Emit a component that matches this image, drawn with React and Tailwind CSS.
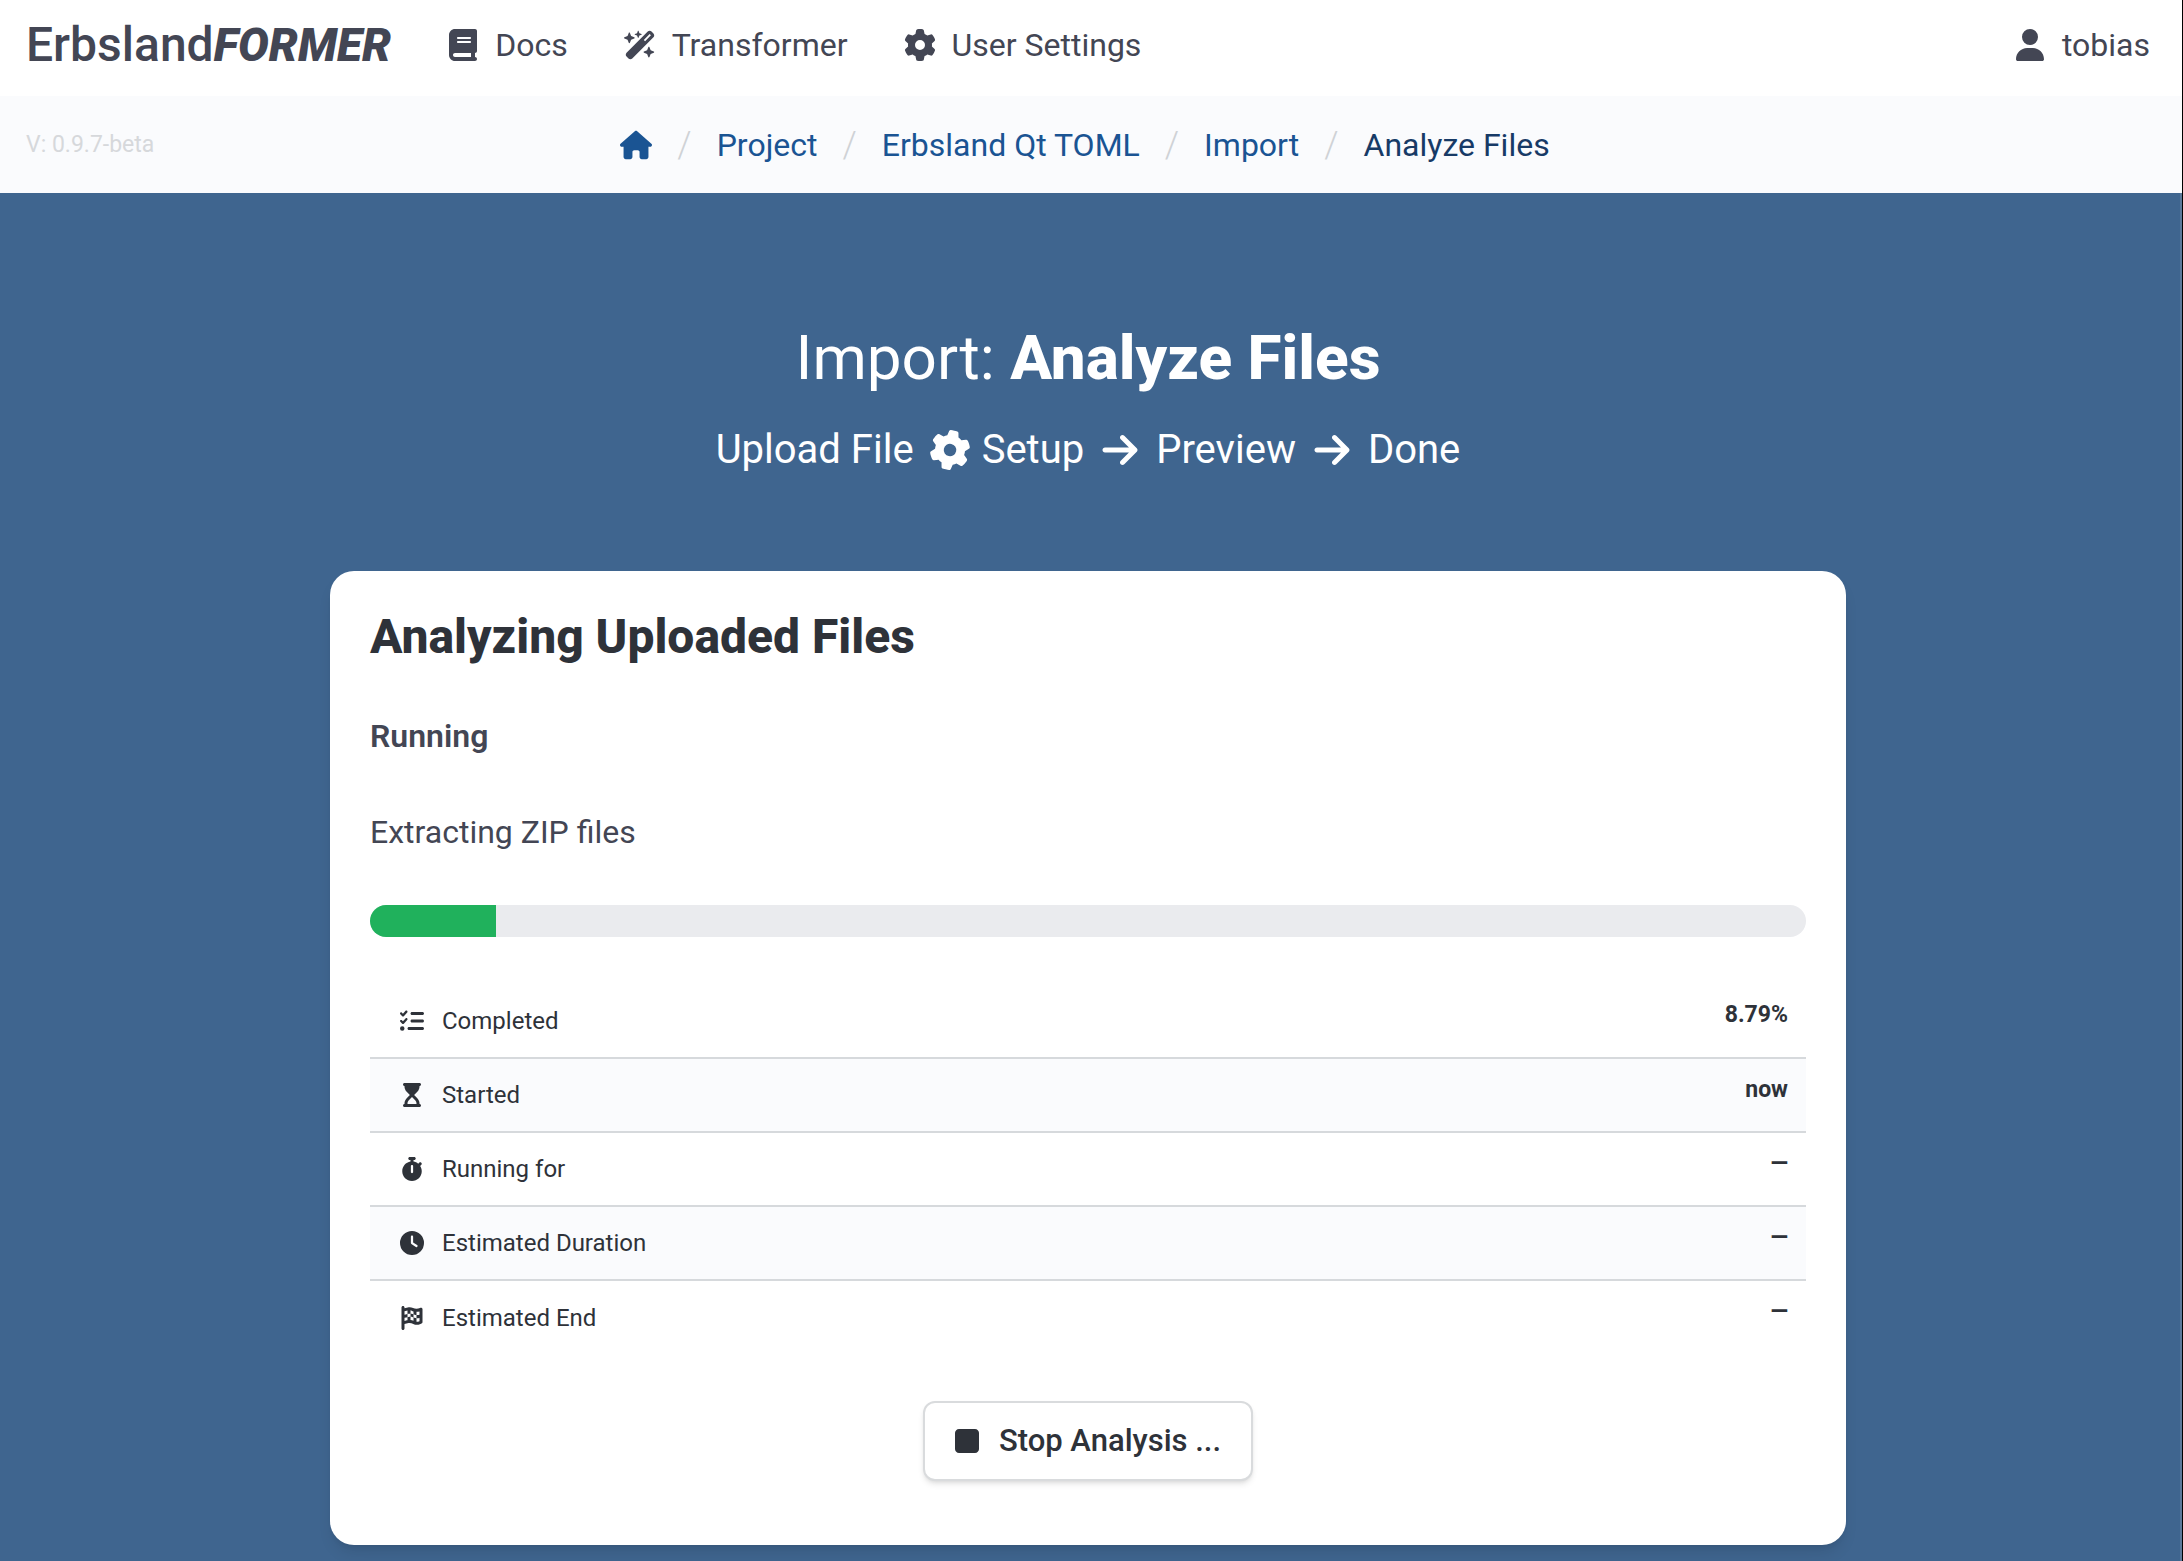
import React from "react";
import {
  FaArrowRight,
  FaBook,
  FaClock,
  FaFlagCheckered,
  FaGear,
  FaHourglassStart,
  FaHouse,
  FaListCheck,
  FaStop,
  FaStopwatch,
  FaUser,
  FaWandMagicSparkles,
} from "react-icons/fa6";

const navItems = [
  { label: "Docs", Icon: FaBook },
  { label: "Transformer", Icon: FaWandMagicSparkles },
  { label: "User Settings", Icon: FaGear },
];

const crumbs = ["Project", "Erbsland Qt TOML", "Import"];

const stats = [
  { label: "Completed", value: "8.79%", Icon: FaListCheck },
  { label: "Started", value: "now", Icon: FaHourglassStart },
  { label: "Running for", value: "—", Icon: FaStopwatch },
  { label: "Estimated Duration", value: "—", Icon: FaClock },
  { label: "Estimated End", value: "—", Icon: FaFlagCheckered },
];

const progress = 8.79;

function NavLink({ label, Icon }) {
  return (
    <a href="#" className="flex items-center gap-4 whitespace-nowrap">
      <Icon className="h-8 w-auto" />
      {label}
    </a>
  );
}

function Header() {
  return (
    <header className="flex h-24 items-center justify-between bg-white pr-8 pb-1.5 pl-[26px] text-[32px] leading-10 text-[#434654]">
      <nav className="flex items-center gap-14">
        <a href="#" className="flex items-baseline text-[48px] leading-14 font-medium">
          Erbsland
          <em className="text-[46px] font-black">FORMER</em>
        </a>
        {navItems.map((item) => (
          <NavLink key={item.label} {...item} />
        ))}
      </nav>
      <NavLink label="tobias" Icon={FaUser} />
    </header>
  );
}

function Slash() {
  return (
    <span aria-hidden="true" className="text-[36px] leading-10 font-light text-[#cfd2d6]">
      /
    </span>
  );
}

function Breadcrumbs() {
  return (
    <div className="grid h-[97px] grid-cols-[1fr_auto_1fr] items-center bg-[#fafbfd] pr-[38px] pl-[26px]">
      <span className="text-[23px] leading-8 text-[#d6d8db]">V: 0.9.7-beta</span>
      <nav aria-label="Breadcrumb">
        <ol className="flex items-center gap-[25px] text-[32px] leading-10 whitespace-nowrap text-[#1a5493]">
          <li>
            <a href="#" aria-label="Home">
              <FaHouse className="h-8 w-auto" />
            </a>
          </li>
          {crumbs.map((c) => (
            <li key={c} className="flex items-center gap-[25px]">
              <Slash />
              <a href="#">{c}</a>
            </li>
          ))}
          <li className="flex items-center gap-[25px]">
            <Slash />
            <a href="#" aria-current="page" className="text-[#173a66]">
              Analyze Files
            </a>
          </li>
        </ol>
      </nav>
    </div>
  );
}

function Hero() {
  return (
    <div className="flex flex-col items-center pt-[125px] text-white">
      <h1 className="text-[62px] leading-20 font-normal">
        Import: <strong className="font-extrabold">Analyze Files</strong>
      </h1>
      <div className="mt-7 flex items-center gap-4 text-[40px] leading-12">
        <span>Upload File</span>
        <span className="flex items-center gap-3">
          <FaGear className="size-10 rotate-12" />
          Setup
        </span>
        <FaArrowRight className="h-10 w-auto" />
        <span>Preview</span>
        <FaArrowRight className="h-10 w-auto" />
        <span>Done</span>
      </div>
    </div>
  );
}

function StatsTable() {
  return (
    <table className="mt-[47px] w-full text-[24px] leading-9 text-[#2e3239]">
      <tbody>
        {stats.map(({ label, value, Icon }) => (
          <tr
            key={label}
            className="h-[74px] border-b-2 border-[#d6d9dc] even:bg-[#fafbfd] last:border-b-0"
          >
            <th scope="row" className="pl-[27px] text-left align-middle font-normal">
              <span className="flex items-center gap-[15px]">
                <span className="flex w-[30px] justify-center">
                  <Icon className="h-6 w-auto" />
                </span>
                {label}
              </span>
            </th>
            <td className="pt-[13px] pr-[18px] text-right align-top text-[23px] font-bold">{value}</td>
          </tr>
        ))}
      </tbody>
    </table>
  );
}

function AnalysisCard() {
  return (
    <section className="mx-auto mt-[97px] w-full max-w-[1516px] rounded-3xl bg-white px-10 pt-[38px] pb-16 shadow-lg">
      <h2 className="text-[48px] leading-14 font-extrabold text-[#2e3239]">Analyzing Uploaded Files</h2>
      <p className="mt-[47px] text-[32px] leading-12 font-semibold text-[#434654]">Running</p>
      <p className="mt-12 text-[32px] leading-12 text-[#434654]">Extracting ZIP files</p>
      <div
        role="progressbar"
        aria-label="Extracting ZIP files"
        aria-valuenow={progress}
        aria-valuemin={0}
        aria-valuemax={100}
        className="mt-[49px] h-8 overflow-hidden rounded-full bg-[#eaebee]"
      >
        <div className="h-full bg-[#20b15c]" style={{ width: `${progress}%` }} />
      </div>
      <StatsTable />
      <div className="mt-[47px] flex justify-center">
        <button
          type="button"
          className="flex h-20 items-center gap-4 rounded-xl border-2 border-[#d9dbdd] bg-white pr-[30px] pl-[26px] text-[31px] leading-10 font-medium text-[#2e3239] shadow-md"
        >
          <FaStop className="h-8 w-auto" />
          Stop Analysis ...
        </button>
      </div>
    </section>
  );
}

export default function App() {
  return (
    <div className="min-h-screen border-r border-black bg-white font-[Roboto,sans-serif]">
      <div className="flex min-h-screen flex-col">
        <Header />
        <Breadcrumbs />
        <main className="flex-1 border-r-2 border-[#5b7899] bg-[#3f658f] pr-1 pb-4">
          <Hero />
          <AnalysisCard />
        </main>
      </div>
    </div>
  );
}
